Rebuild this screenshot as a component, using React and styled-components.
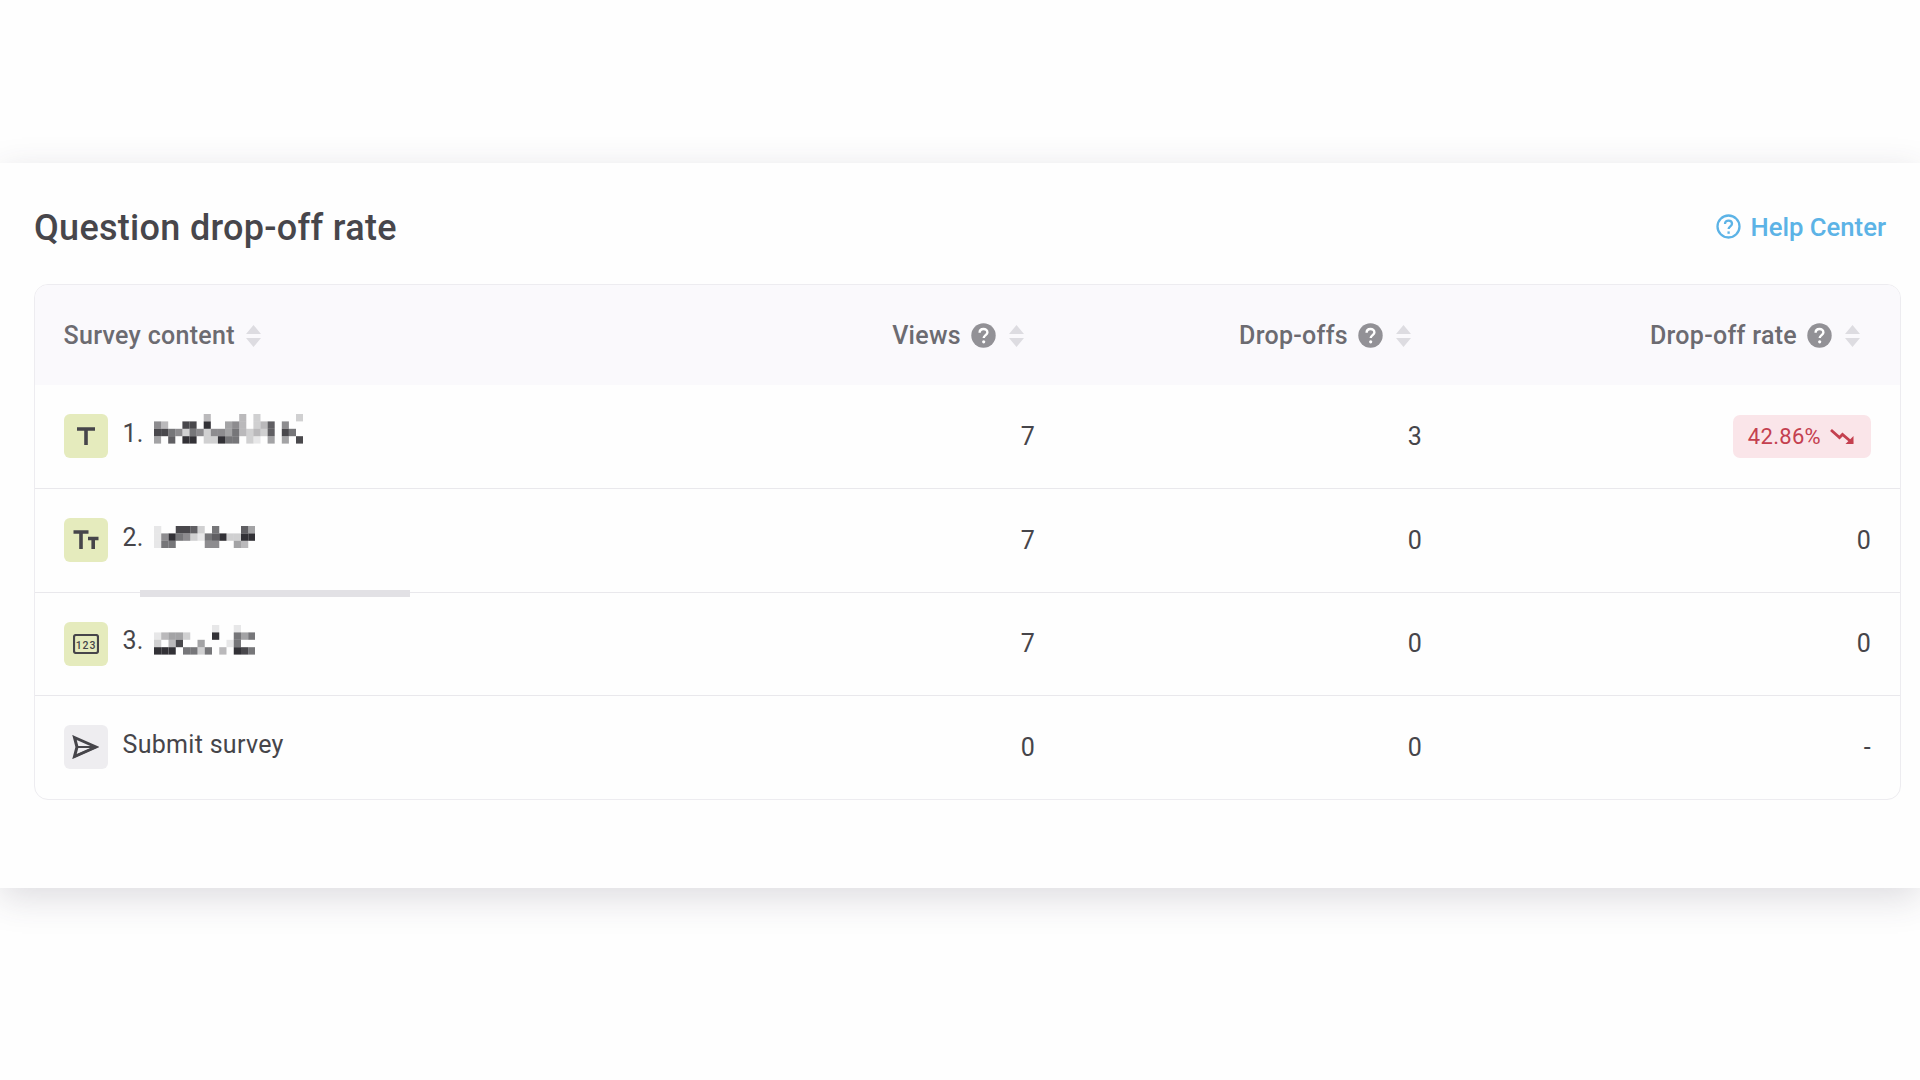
import React from 'react';
import styled, { createGlobalStyle } from 'styled-components';

const GlobalStyle = createGlobalStyle`
  html, body {
    margin: 0;
    padding: 0;
    background: #fefefe;
    font-family: Roboto, "Liberation Sans", sans-serif;
    letter-spacing: 0.3px;
    overflow: hidden;
  }
`;

const Page = styled.div`
  height: 1080px;
  padding-top: 163px;
  box-sizing: border-box;
`;

const Panel = styled.section`
  height: 725px;
  box-sizing: border-box;
  padding: 0 19px 0 34px;
  background: #fefefe;
  box-shadow: 0 10px 34px rgba(60, 55, 75, 0.17);
`;

const PanelHead = styled.header`
  height: 121px;
  padding: 8px 15px 0 0;
  box-sizing: border-box;
  display: flex;
  align-items: center;
  justify-content: space-between;
`;

const Title = styled.h2`
  margin: 0;
  font-size: 36px;
  font-weight: 500;
  color: #47464b;
`;

const HelpLink = styled.a`
  display: flex;
  align-items: center;
  gap: 9px;
  margin-top: -2px;
  font-size: 25.7px;
  font-weight: 500;
  letter-spacing: 0;
  color: #5cb3e6;
`;

const Table = styled.div`
  position: relative;
  border: 1.5px solid #edecf0;
  border-radius: 14px;
  overflow: hidden;
`;

const Row = styled.div`
  display: grid;
  grid-template-columns: 539px 1fr 387px 449px;
  height: ${p => (p.$head ? '99.5px' : '103.5px')};
  align-items: center;
  box-sizing: border-box;
  background: ${p => (p.$head ? '#faf9fc' : 'transparent')};
  border-top: ${p => (p.$head || p.$first ? 'none' : '1.5px solid #e9e8ec')};
`;

const HeadCell = styled.div`
  display: flex;
  align-items: center;
  justify-content: ${p => (p.$left ? 'flex-start' : 'flex-end')};
  padding: ${p => (p.$left ? '2px 0 0 28.5px' : '2px 39px 0 0')};
  font-size: 25px;
  font-weight: 500;
  color: #6c6b71;
`;

const HeadIcons = styled.span`
  display: flex;
  align-items: center;
  gap: 12px;
  margin-left: 10px;
`;

const NameCell = styled.div`
  display: flex;
  align-items: center;
  gap: 15px;
  padding-left: 28.5px;
  font-size: 25px;
  color: #46454a;
`;

const TypeIcon = styled.span`
  flex: none;
  width: 44px;
  height: 44px;
  border-radius: 6px;
  display: flex;
  align-items: center;
  justify-content: center;
  background: ${p => (p.$grey ? '#eeedf0' : '#e5ebbd')};
`;

const Label = styled.span`
  display: flex;
  align-items: center;
  gap: 10px;
  margin-top: -6px;
`;

const MosaicSvg = styled.svg`
  flex: none;
  margin-top: ${p => p.$top}px;
  filter: blur(0.3px);
`;

const NumCell = styled.div`
  text-align: right;
  padding-right: 29px;
  font-size: 25px;
  color: #46454a;
`;

const RateCell = styled(NumCell)`
  display: flex;
  justify-content: flex-end;
`;

const Badge = styled.span`
  display: flex;
  align-items: center;
  gap: 9px;
  height: 43px;
  padding: 0 16px 0 15px;
  border-radius: 7px;
  background: #fae5e9;
  color: #c4404f;
  font-size: 22px;
`;

// the scroll area of the name column lies over the table rows
const DividerGap = styled.div`
  position: absolute;
  left: 111px;
  top: 300px;
  width: 264px;
  height: 6px;
  background: #fefefe;
`;

const ScrollThumb = styled.div`
  position: absolute;
  left: 105px;
  top: 305px;
  width: 270px;
  height: 7px;
  background: #e2e1e5;
`;

const SortIcon = () => (
  <svg width="17" height="24" viewBox="0 0 17 24">
    <path d="M8.5 1 L16 10 H1 Z M8.5 23 L16 14 H1 Z" fill="#dddce1" />
  </svg>
);

const HelpIcon = () => (
  <svg width="25" height="25" viewBox="0 0 25 25">
    <circle cx="12.5" cy="12.5" r="12.2" fill="#929196" />
    <path d="M8.6 9.7c0-2.3 1.7-3.7 3.9-3.7s3.9 1.4 3.9 3.4c0 2.6-3.7 2.9-3.7 5.7" fill="none" stroke="#fff" strokeWidth="2.4" />
    <circle cx="12.7" cy="18.8" r="1.6" fill="#fff" />
  </svg>
);

const CircleHelp = () => (
  <svg width="25" height="25" viewBox="0 0 25 25" fill="none" stroke="#5cb3e6" strokeWidth="2.3">
    <circle cx="12.5" cy="12.5" r="11" />
    <path d="M9 10c0-2.2 1.6-3.4 3.5-3.4s3.5 1.2 3.5 3.2c0 2.4-3.4 2.6-3.4 5.2" />
    <path d="M12.6 17.4v2.4" />
  </svg>
);

const TrendDown = () => (
  <svg width="25" height="17" viewBox="0 0 25 17" fill="none" stroke="#c4404f" strokeWidth="2.8">
    <path d="M1 2l8.5 7.5 3-3 10 8.5" />
    <path d="M23.5 8v8h-8z" fill="#c4404f" stroke="none" />
  </svg>
);

const TextIcon = () => (
  <svg width="20" height="20" viewBox="0 0 20 20" fill="none" stroke="#46454a" strokeWidth="3.6">
    <path d="M1 3h18M10 3v16" />
  </svg>
);

const TitleIcon = () => (
  <svg width="26" height="22" viewBox="0 0 26 22" fill="none" stroke="#46454a" strokeWidth="3.6">
    <path d="M0.5 3h15M8 3v17" />
    <path d="M15 9.5h10.5M20.2 9.5V20" />
  </svg>
);

const NumberIcon = () => (
  <svg width="26" height="20" viewBox="0 0 26 20">
    <rect x="1" y="1" width="24" height="18" rx="2" fill="none" stroke="#46454a" strokeWidth="2.2" />
    <text x="13" y="14.5" textAnchor="middle" fontFamily="Roboto, sans-serif" fontSize="10.5" fontWeight="500" letterSpacing="0.8" fill="#46454a">123</text>
  </svg>
);

const SendIcon = () => (
  <svg width="27" height="24" viewBox="0 0 27 24" fill="none" stroke="#46454a" strokeWidth="3" strokeLinejoin="miter">
    <path d="M2.5 2.5 L24 12 L2.5 21.5 L5 12 Z" />
    <path d="M5 12 H24 M2.5 21.5 L24 12" strokeWidth="2" />
  </svg>
);

// ภาพเบลอของชื่อคำถาม: แต่ละตัวเลขคือความเข้มของช่อง
const Mosaic = ({ rows, top, cell }) => {
  const rowHeight = 7.4;
  return (
    <MosaicSvg $top={top} width={rows[0].length * cell} height={rowHeight * rows.length}>
      {rows.map((line, y) =>
        line.split('').map((c, x) => (c === '.' ? null : (
          <rect key={`${x}-${y}`} x={x * cell} y={y * rowHeight} width={cell} height={rowHeight} fill="#323136" opacity={Number(c) / 9} />
        )))
      )}
    </MosaicSvg>
  );
};

const mosaicOne = [
  '.......3....3.2.....2',
  '53..88.9..453.237.5..',
  '88652652554632327.86.',
  '4.7.99.22966.21.4.4.8',
];

const mosaicTwo = [
  '1..8872.6...74',
  '15965216792299',
  '166....55..43.',
];

const mosaicThree = [
  '........1..1..',
  '13442...9..646',
  '2.38..4...16..',
  '999.6626.3.986',
];

const questions = [
  { id: 1, icon: <TextIcon />, rows: mosaicOne, top: -8, cell: 7.1, views: 7, drops: 3, rate: '42.86%' },
  { id: 2, icon: <TitleIcon />, rows: mosaicTwo, top: 0, cell: 7.25, views: 7, drops: 0, rate: 0 },
  { id: 3, icon: <NumberIcon />, rows: mosaicThree, top: -1, cell: 7.25, views: 7, drops: 0, rate: 0 },
];

const headers = ['Views', 'Drop-offs', 'Drop-off rate'];

const App = () => (
  <Page>
    <GlobalStyle />
    <Panel>
      <PanelHead>
        <Title>Question drop-off rate</Title>
        <HelpLink><CircleHelp />Help Center</HelpLink>
      </PanelHead>
      <Table>
        <Row $head>
          <HeadCell $left>
            Survey content
            <HeadIcons><SortIcon /></HeadIcons>
          </HeadCell>
          {headers.map(h => (
            <HeadCell key={h}>
              {h}
              <HeadIcons><HelpIcon /><SortIcon /></HeadIcons>
            </HeadCell>
          ))}
        </Row>
        {questions.map((q, i) => (
          <Row key={q.id} $first={i === 0}>
            <NameCell>
              <TypeIcon>{q.icon}</TypeIcon>
              <Label>{q.id}. <Mosaic rows={q.rows} top={q.top} cell={q.cell} /></Label>
            </NameCell>
            <NumCell>{q.views}</NumCell>
            <NumCell>{q.drops}</NumCell>
            <RateCell>
              {q.id === 1 ? <Badge>{q.rate}<TrendDown /></Badge> : q.rate}
            </RateCell>
          </Row>
        ))}
        <Row>
          <NameCell>
            <TypeIcon $grey><SendIcon /></TypeIcon>
            <Label>Submit survey</Label>
          </NameCell>
          <NumCell>0</NumCell>
          <NumCell>0</NumCell>
          <RateCell>-</RateCell>
        </Row>
        <DividerGap />
        <ScrollThumb />
      </Table>
    </Panel>
  </Page>
);

export default App;
